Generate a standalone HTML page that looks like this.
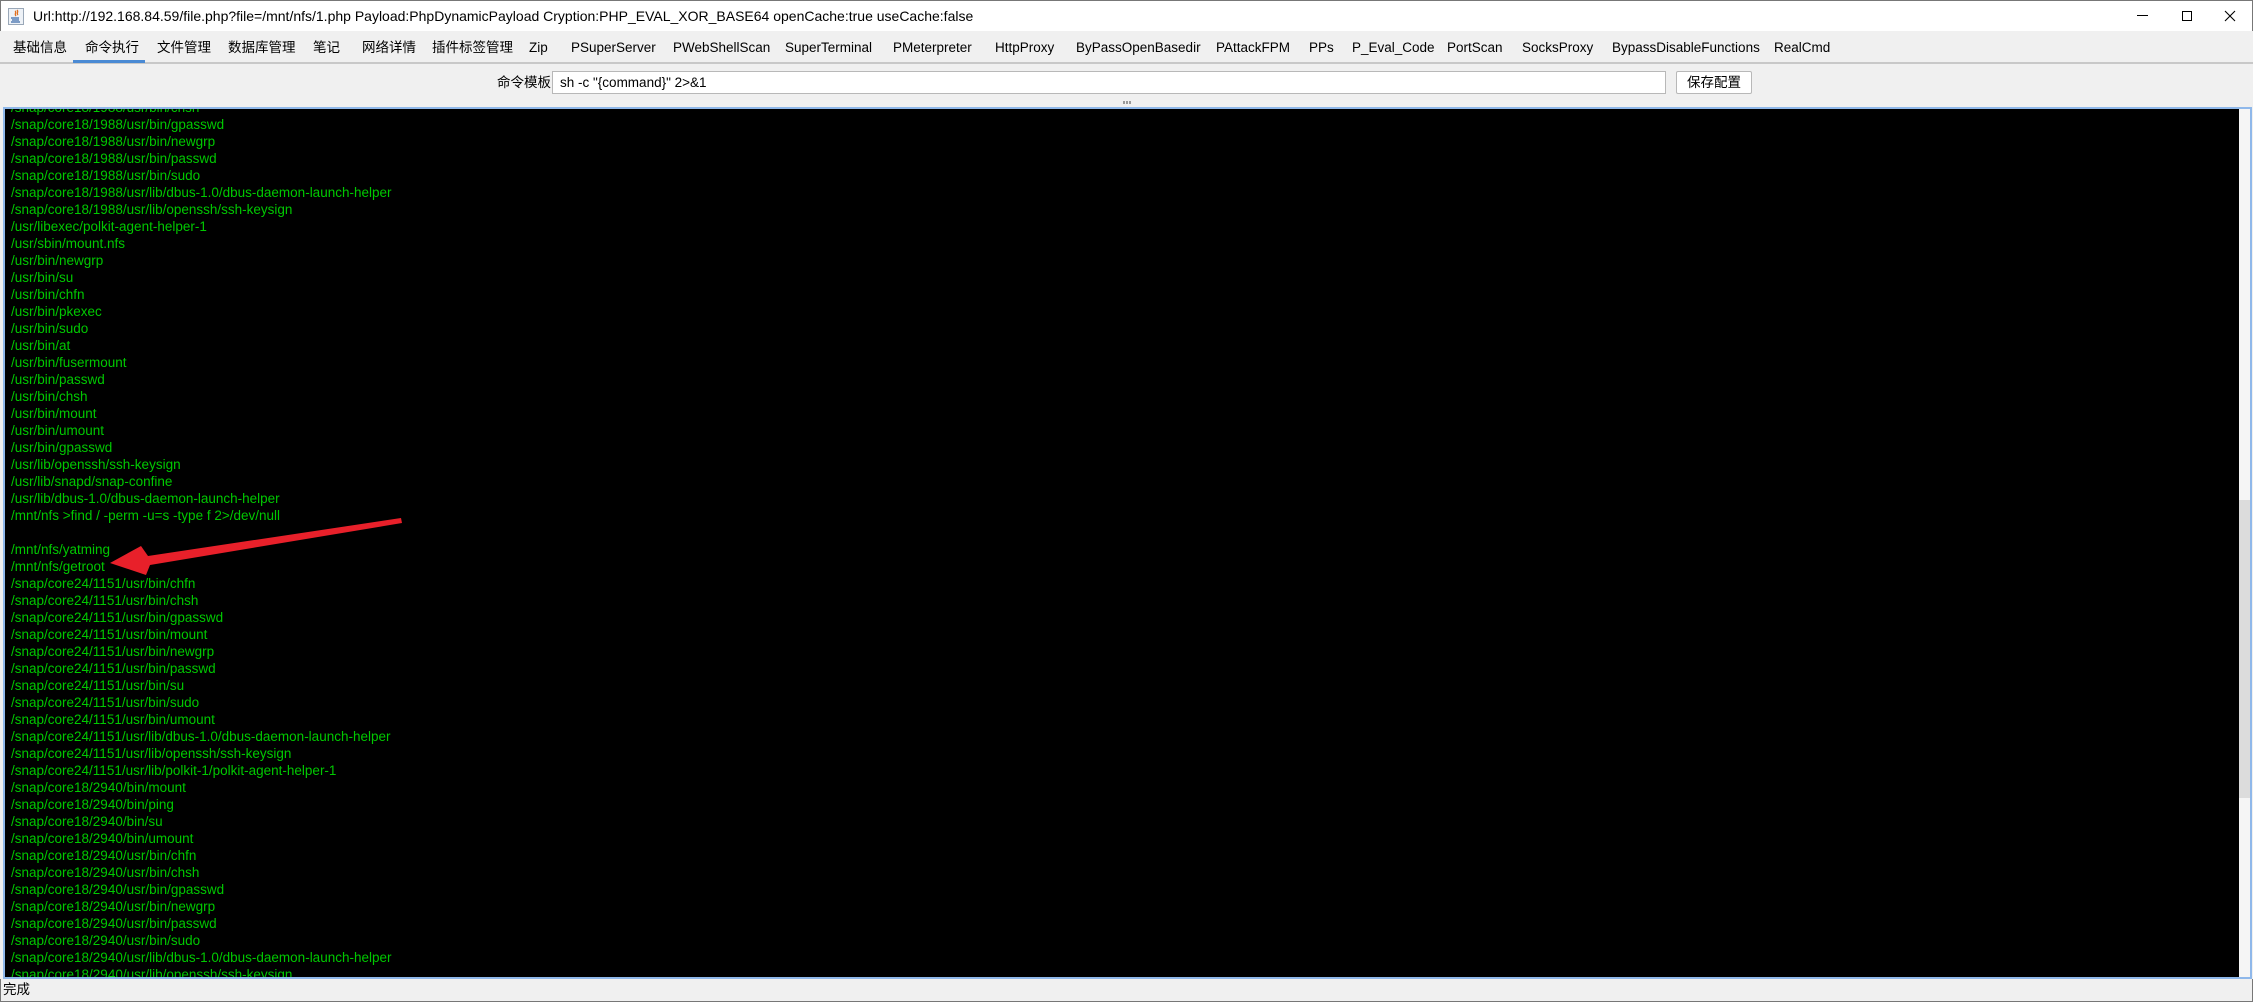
<!DOCTYPE html>
<html><head><meta charset="utf-8"><style>
*{margin:0;padding:0;box-sizing:border-box}
body{width:2253px;height:1002px;overflow:hidden;background:#f0f0f0;font-family:"Liberation Sans","Noto Sans CJK SC",sans-serif;position:relative;color:#000}
.a{position:absolute;white-space:nowrap}
#title{left:0;top:0;width:2253px;height:31px;background:#fff;border:1px solid #777;border-bottom:none}
#tabs{left:0;top:31px;width:2253px;height:33px;background:#f0f0f0;border-bottom:2px solid #c8c8c8}
.t{position:absolute;top:40px;font-size:13.5px;line-height:16px;height:16px;white-space:nowrap}
#term{left:3px;top:107px;width:2249px;height:872px;border:2px solid #8fb8ea;background:#000;overflow:hidden}
#lines{position:absolute;left:6px;top:-10px;font-size:13.5px;line-height:17px;color:#00c800;white-space:pre}
.d{position:absolute;top:101px;width:2px;height:3px;background:#999}
</style></head><body>
<div class="a" id="title"></div>
<svg class="a" style="left:8px;top:8px" width="16" height="17" viewBox="0 0 16 17"><rect x="0.5" y="0.5" width="15" height="16" fill="#eef2f7" stroke="#9aa8b8"/><path d="M7 3c2 1-1 3 1 5M9 2c2 2-1 3 1 5" stroke="#e07020" fill="none" stroke-width="1.3"/><path d="M3 10h8M4 12h7M3 14h9" stroke="#3a6aa8" stroke-width="1.2"/></svg>
<div class="a" style="left:33px;top:7px;font-size:14px;line-height:18px">Url:http://192.168.84.59/file.php?file=/mnt/nfs/1.php Payload:PhpDynamicPayload Cryption:PHP_EVAL_XOR_BASE64 openCache:true useCache:false</div>
<div class="a" style="left:2137px;top:15px;width:11px;height:1px;background:#000"></div>
<div class="a" style="left:2182px;top:11px;width:10px;height:10px;border:1px solid #000"></div>
<svg class="a" style="left:2224px;top:10px" width="12" height="12"><path d="M1 1L11 11M11 1L1 11" stroke="#000" stroke-width="1.1"/></svg>
<div class="a" id="tabs"></div>
<div class="t" style="left:13px">基础信息</div>
<div class="t" style="left:85px">命令执行</div>
<div class="a" style="left:73px;top:60px;width:72px;height:3px;background:#4a8ad4"></div>
<div class="t" style="left:157px">文件管理</div>
<div class="t" style="left:228px">数据库管理</div>
<div class="t" style="left:313px">笔记</div>
<div class="t" style="left:362px">网络详情</div>
<div class="t" style="left:432px">插件标签管理</div>
<div class="t" style="left:529px">Zip</div>
<div class="t" style="left:571px">PSuperServer</div>
<div class="t" style="left:673px">PWebShellScan</div>
<div class="t" style="left:785px">SuperTerminal</div>
<div class="t" style="left:893px">PMeterpreter</div>
<div class="t" style="left:995px">HttpProxy</div>
<div class="t" style="left:1076px">ByPassOpenBasedir</div>
<div class="t" style="left:1216px">PAttackFPM</div>
<div class="t" style="left:1309px">PPs</div>
<div class="t" style="left:1352px">P_Eval_Code</div>
<div class="t" style="left:1447px">PortScan</div>
<div class="t" style="left:1522px">SocksProxy</div>
<div class="t" style="left:1612px">BypassDisableFunctions</div>
<div class="t" style="left:1774px">RealCmd</div>
<div class="a" style="left:497px;top:75px;font-size:13.5px;line-height:16px">命令模板</div>
<div class="a" style="left:552px;top:71px;width:1114px;height:23px;background:#fff;border:1px solid #b8b8b8"></div>
<div class="a" style="left:560px;top:75px;font-size:13.5px;line-height:16px">sh -c "{command}" 2&gt;&amp;1</div>
<div class="a" style="left:1676px;top:71px;width:76px;height:23px;background:#fff;border:1px solid #b8b8b8;border-radius:2px;font-size:13.5px;text-align:center;line-height:21px">保存配置</div>
<div class="d" style="left:1123px"></div><div class="d" style="left:1126px"></div><div class="d" style="left:1129px"></div>
<div class="a" id="term"><div id="lines">/snap/core18/1988/usr/bin/chsh
/snap/core18/1988/usr/bin/gpasswd
/snap/core18/1988/usr/bin/newgrp
/snap/core18/1988/usr/bin/passwd
/snap/core18/1988/usr/bin/sudo
/snap/core18/1988/usr/lib/dbus-1.0/dbus-daemon-launch-helper
/snap/core18/1988/usr/lib/openssh/ssh-keysign
/usr/libexec/polkit-agent-helper-1
/usr/sbin/mount.nfs
/usr/bin/newgrp
/usr/bin/su
/usr/bin/chfn
/usr/bin/pkexec
/usr/bin/sudo
/usr/bin/at
/usr/bin/fusermount
/usr/bin/passwd
/usr/bin/chsh
/usr/bin/mount
/usr/bin/umount
/usr/bin/gpasswd
/usr/lib/openssh/ssh-keysign
/usr/lib/snapd/snap-confine
/usr/lib/dbus-1.0/dbus-daemon-launch-helper
/mnt/nfs &gt;find / -perm -u=s -type f 2&gt;/dev/null

/mnt/nfs/yatming
/mnt/nfs/getroot
/snap/core24/1151/usr/bin/chfn
/snap/core24/1151/usr/bin/chsh
/snap/core24/1151/usr/bin/gpasswd
/snap/core24/1151/usr/bin/mount
/snap/core24/1151/usr/bin/newgrp
/snap/core24/1151/usr/bin/passwd
/snap/core24/1151/usr/bin/su
/snap/core24/1151/usr/bin/sudo
/snap/core24/1151/usr/bin/umount
/snap/core24/1151/usr/lib/dbus-1.0/dbus-daemon-launch-helper
/snap/core24/1151/usr/lib/openssh/ssh-keysign
/snap/core24/1151/usr/lib/polkit-1/polkit-agent-helper-1
/snap/core18/2940/bin/mount
/snap/core18/2940/bin/ping
/snap/core18/2940/bin/su
/snap/core18/2940/bin/umount
/snap/core18/2940/usr/bin/chfn
/snap/core18/2940/usr/bin/chsh
/snap/core18/2940/usr/bin/gpasswd
/snap/core18/2940/usr/bin/newgrp
/snap/core18/2940/usr/bin/passwd
/snap/core18/2940/usr/bin/sudo
/snap/core18/2940/usr/lib/dbus-1.0/dbus-daemon-launch-helper
/snap/core18/2940/usr/lib/openssh/ssh-keysign</div>
<div class="a" style="left:2234px;top:0;width:11px;height:868px;background:#f5f5f5"></div>
<div class="a" style="left:2234px;top:391px;width:11px;height:298px;background:#dcdcdc"></div>
</div>
<svg class="a" style="left:0;top:0" width="2253" height="1002"><polygon points="401,518 402,523 150,565 146,575 110,563 141,546 148,556" fill="#e8202a"/></svg>
<div class="a" style="left:0;top:979px;width:2253px;height:23px;background:#f0f0f0;border:1px solid #777;border-top:none"></div>
<div class="a" style="left:3px;top:982px;font-size:13.5px;line-height:16px">完成</div>
</body></html>
